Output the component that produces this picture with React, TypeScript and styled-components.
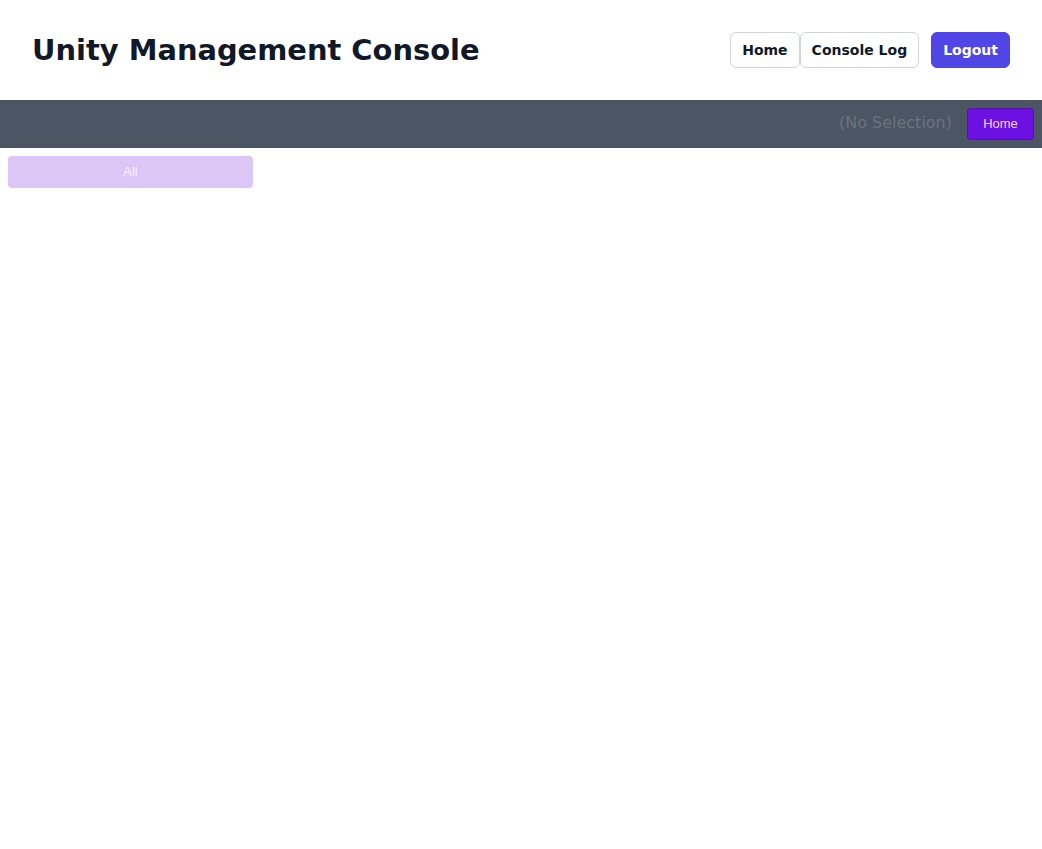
import React from "react";
import styled, { createGlobalStyle } from "styled-components";

const Global = createGlobalStyle`
  html, body { margin: 0; padding: 0; background: #ffffff; }
  body { font-family: "DejaVu Sans", sans-serif; }
  * { box-sizing: border-box; }
`;

const Header = styled.header`
  display: flex;
  align-items: center;
  justify-content: space-between;
  height: 100px;
  padding: 0 32px;
`;

const Title = styled.h1`
  margin: 0;
  font-family: "DejaVu Sans", sans-serif;
  font-size: 28.9px;
  font-weight: 700;
  color: #111827;
  line-height: 36px;
`;

const Nav = styled.nav`
  display: flex;
  align-items: center;
  gap: 12px;
`;

const NavGroup = styled.div`
  display: flex;
`;

const NavButton = styled.button<{ $primary?: boolean }>`
  height: 36px;
  padding: 0 11px;
  font-family: "DejaVu Sans", sans-serif;
  font-size: 14px;
  font-weight: 700;
  border-radius: 6px;
  cursor: pointer;
  border: 1px solid ${(p) => (p.$primary ? "#4f46e5" : "#d1d5db")};
  background: ${(p) => (p.$primary ? "#4f46e5" : "#ffffff")};
  color: ${(p) => (p.$primary ? "#ffffff" : "#111827")};
`;

const Bar = styled.div`
  display: flex;
  align-items: center;
  justify-content: flex-end;
  gap: 15px;
  height: 48px;
  padding: 0 8px;
  background: #4b5563;
`;

const Selection = styled.span`
  font-family: "DejaVu Sans", sans-serif;
  font-size: 16px;
  color: #6b7280;
  margin-top: -4px;
`;

const BarButton = styled.button`
  width: 67px;
  height: 32px;
  padding: 0 0 2px;
  font-family: "Liberation Sans", Arial, sans-serif;
  font-size: 13px;
  color: #ead7fe;
  background: #6d10e2;
  border: 1px solid #5a0cbc;
  border-radius: 3px;
  cursor: pointer;
`;

const Content = styled.main`
  padding: 8px;
`;

const FilterButton = styled.button`
  display: block;
  width: 245px;
  height: 32px;
  padding: 0 0 2px;
  font-family: "Liberation Sans", Arial, sans-serif;
  font-size: 13px;
  color: #f5f0fd;
  background: #dcc6f6;
  border: none;
  border-radius: 4px;
  cursor: pointer;
`;

export default function App() {
  return (
    <>
      <Global />
      <Header>
        <Title>Unity Management Console</Title>
        <Nav>
          <NavGroup>
            <NavButton>Home</NavButton>
            <NavButton>Console Log</NavButton>
          </NavGroup>
          <NavButton $primary>Logout</NavButton>
        </Nav>
      </Header>
      <Bar>
        <Selection>(No Selection)</Selection>
        <BarButton>Home</BarButton>
      </Bar>
      <Content>
        <FilterButton>All</FilterButton>
      </Content>
    </>
  );
}
